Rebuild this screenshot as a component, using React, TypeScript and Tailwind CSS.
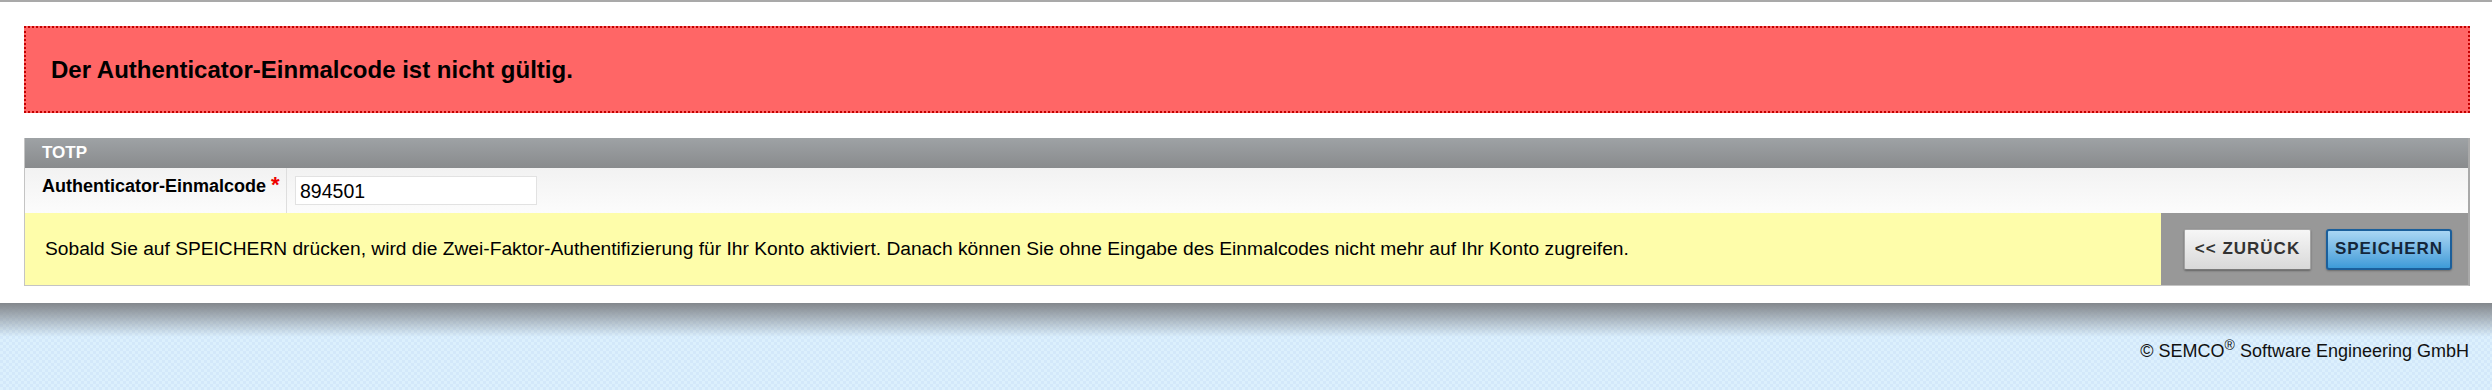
export default function App() {
  return (
    <div className="min-h-[390px] bg-white font-['Liberation_Sans',Arial,sans-serif] text-black">
      <div className="h-[2px] bg-[#a9a9a9]" />

      <main className="pl-[24px] pr-[22px] pt-[24px] pb-[17px]">
        {/* error message */}
        <div className="flex h-[87px] items-center border-2 border-dotted border-[#c40000] bg-[#ff6666] pl-[25px]">
          <span className="text-[24px] leading-[28px] font-bold">Der Authenticator-Einmalcode ist nicht gültig.</span>
        </div>

        {/* TOTP panel */}
        <section className="mt-[25px] border-r-2 border-b border-l border-[#c4c4c4] border-r-[#a9a9a9]">
          <div className="flex h-[30px] items-center bg-linear-to-b from-[#9ea2a5] to-[#898b8d] pl-[17px]">
            <span className="text-[17px] leading-[20px] font-bold text-white">TOTP</span>
          </div>

          <div className="flex h-[45px] bg-linear-to-b from-[#f2f2f2] to-[#fcfcfc]">
            <div className="w-[262px] shrink-0 border-r border-[#dedede] pt-[7px] pl-[17px]">
              <span className="text-[18px] leading-[21px] font-bold">Authenticator-Einmalcode</span>
              <span className="ml-[5px] align-top text-[22px] leading-[20px] font-bold text-[#ee0000]">*</span>
            </div>
            <div className="pt-[8px] pl-[8px]">
              <input
                readOnly
                value="894501"
                className="h-[29px] w-[242px] border border-[#e2e2e2] bg-white px-[4px] pt-[2px] text-[19.5px] text-black outline-none"
              />
            </div>
          </div>

          <div className="flex h-[72px]">
            <div className="flex flex-1 items-center bg-[#fefdaa] pl-[20px]">
              <p className="text-[19.2px] leading-[22px]">
                Sobald Sie auf SPEICHERN drücken, wird die Zwei-Faktor-Authentifizierung für Ihr Konto aktiviert. Danach können Sie ohne Eingabe des Einmalcodes nicht mehr auf Ihr Konto zugreifen.
              </p>
            </div>
            <div className="flex w-[307px] shrink-0 items-center gap-[15px] bg-[#989898] pl-[23px]">
              <button className="h-[41px] w-[127px] rounded-[2px] border border-[#a4a4a4] border-b-[#7a7a7a] bg-linear-to-b from-[#f6f6f6] to-[#d9d9d9] text-[17px] font-bold tracking-[1px] text-[#333333] shadow-[0_1px_2px_rgba(0,0,0,0.35)]">
                &lt;&lt; ZURÜCK
              </button>
              <button className="h-[41px] w-[126px] rounded-[3px] border-2 border-[#1b5f9b] bg-linear-to-b from-[#a9d6f3] to-[#3c9bd8] text-[17px] font-bold tracking-[1px] text-[#14263a] shadow-[0_1px_2px_rgba(0,0,0,0.3)]">
                SPEICHERN
              </button>
            </div>
          </div>
        </section>
      </main>

      <footer className="h-[88px] bg-[#d9edfc] bg-[image:repeating-conic-gradient(#d3e8fa_0_25%,#dcf0fd_0_50%)] bg-size-[6px_6px]">
        <div className="h-[34px] bg-linear-to-b from-[#83878c] to-[#d9edfc]/0" />
        <div className="flex justify-end pr-[23px] pt-[3px]">
          <span className="text-[18px] leading-[22px] text-[#111111]">
            © SEMCO<sup className="text-[14px] leading-none">®</sup> Software Engineering GmbH
          </span>
        </div>
      </footer>
    </div>
  );
}
